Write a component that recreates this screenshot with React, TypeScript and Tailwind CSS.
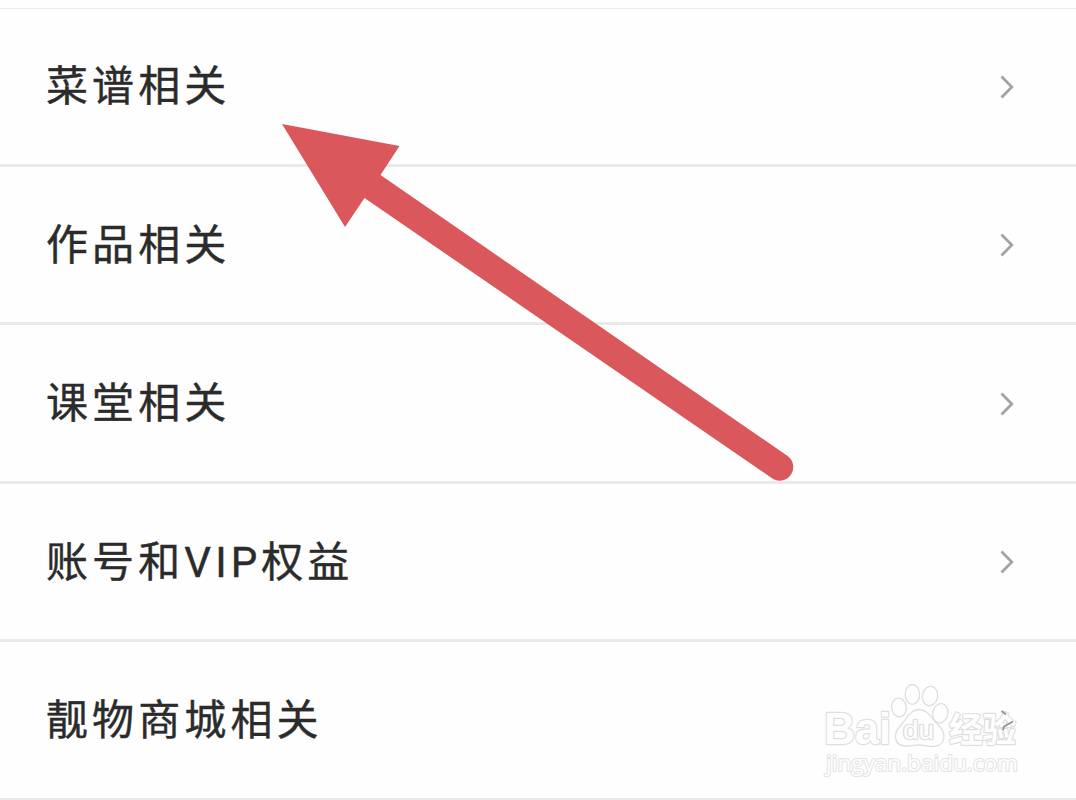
import React from "react";

const items = [
  { title: "菜谱相关", height: "h-[158px]" },
  { title: "作品相关", height: "h-[158px] pt-px" },
  { title: "课堂相关", height: "h-[159px] pt-px" },
  { title: "账号和VIP权益", height: "h-[158px] pt-px" },
  { title: "靓物商城相关", height: "h-[159px]" },
];

const Chevron = () => (
  <svg
    className="w-4 h-6 shrink-0"
    viewBox="0 0 16 24"
    fill="none"
    stroke="#a3a3a3"
    strokeWidth="2.8"
  >
    <path d="M1.5 1.5 L11.8 12 L1.5 22.5" />
  </svg>
);

const Row = ({ title, height }: { title: string; height: string }) => (
  <li
    className={`${height} flex items-center justify-between border-b-[3px] border-[#e9e9e9] pl-[46px] pr-[60px]`}
  >
    <span className="pt-px text-[42px] leading-none tracking-[4.1px] text-[#2b2b2b] [-webkit-text-stroke:0.4px_#2b2b2b]">
      {title}
    </span>
    <Chevron />
  </li>
);

const Arrow = () => (
  <svg
    className="absolute left-0 top-0 pointer-events-none"
    width="1076"
    height="800"
    viewBox="0 0 1076 800"
    fill="#da575b"
  >
    <path d="M282 124 L399.5 146 L380.5 175 L788 456.3 A13.6 13.6 0 0 1 773 478.9 L364.5 198 L345 227 Z" />
  </svg>
);

const Watermark = () => (
  <svg
    className="absolute left-[816px] top-[676px] pointer-events-none"
    width="220"
    height="112"
    viewBox="0 0 220 112"
    fill="#fefefe"
    stroke="#dedede"
    strokeWidth="1.3"
    strokeLinejoin="round"
  >
    {/* covers the row's chevron behind the lettering */}
    <path d="M182 32 H200 V60 H182 Z" stroke="none" />
    <g className="font-['Liberation_Sans',sans-serif] font-bold" paintOrder="stroke" strokeWidth="2.4">
      <text x="8" y="68" fontSize="44" textLength="67" lengthAdjust="spacingAndGlyphs">Bai</text>
    </g>
    {/* paw */}
    <ellipse cx="83" cy="31.5" rx="7.4" ry="9.4" transform="rotate(-8 83 31.5)" />
    <ellipse cx="96.4" cy="18.4" rx="7.2" ry="9.9" />
    <ellipse cx="114" cy="20" rx="7.6" ry="9.7" transform="rotate(10 114 20)" />
    <ellipse cx="124.3" cy="37.2" rx="7.6" ry="9.7" transform="rotate(12 124.3 37.2)" />
    <path d="M103 33.5 C110 33.5 114 39 117 43 C121 49 128 52 128 60 C128 67 123 70.5 116 70.5 C110 70.5 108 69 103 69 C98 69 96 70 90 70 C83 70 79.5 66 79.5 60 C79.5 53 85 50 89 44 C92 39 96 33.5 103 33.5 Z" />
    <g className="font-['Liberation_Sans',sans-serif]" paintOrder="stroke" strokeWidth="2.6">
      <text x="87" y="63" fontSize="26" textLength="31" lengthAdjust="spacingAndGlyphs">du</text>
    </g>
    <g className="font-['Noto_Sans_CJK_SC',sans-serif] font-bold" paintOrder="stroke" strokeWidth="2.4">
      <text x="133" y="66" fontSize="34" textLength="67" lengthAdjust="spacingAndGlyphs">经验</text>
    </g>
    <g className="font-['Open_Sans',sans-serif] font-medium" paintOrder="stroke" stroke="#e3e3e3" strokeWidth="2">
      <text x="10" y="94.5" fontSize="22.5" textLength="192" lengthAdjust="spacingAndGlyphs">jingyan.baidu.com</text>
    </g>
    {/* bits of the chevron left visible between the strokes */}
    <path d="M185.5 35 L190 38.5 M197 45.5 L188 50.5 L187 54" fill="none" stroke="#909090" strokeWidth="1.7" />
  </svg>
);

const App = () => {
  return (
    <main className="relative w-[1076px] h-[800px] overflow-hidden bg-[#fefefe] font-[Roboto,'Noto_Sans_CJK_SC',sans-serif]">
      <div className="h-[9px] border-b border-[#e9e9e9]"></div>
      <ul>
        {items.map((item) => (
          <Row key={item.title} title={item.title} height={item.height} />
        ))}
      </ul>
      <Arrow />
      <Watermark />
    </main>
  );
};

export default App;
